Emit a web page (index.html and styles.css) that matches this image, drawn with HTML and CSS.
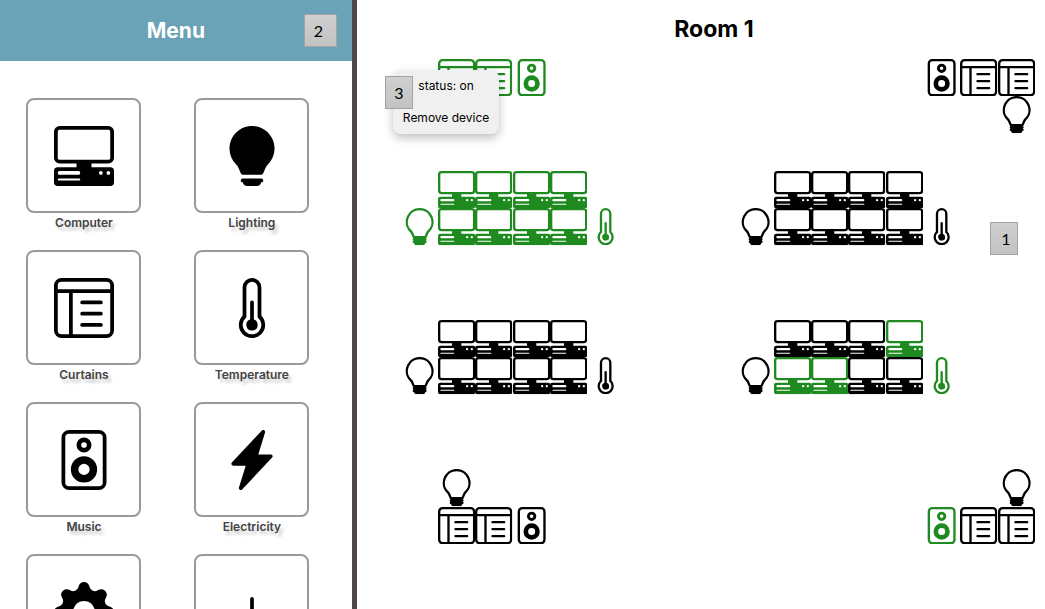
FILE: index.html
```html
<!DOCTYPE html>
<html lang="en">
<head>
<meta charset="utf-8">
<title>Room 1</title>
<link rel="stylesheet" href="styles.css">
</head>
<body>
<svg class="sprite" aria-hidden="true">
  <symbol id="computer" viewBox="0 0 16 16"><path d="M1.500 0A1.500 1.500 0 0 0 0 1.500v7A1.500 1.500 0 0 0 1.500 10H6v1H1a1 1 0 0 0-1 1v3a1 1 0 0 0 1 1h14a1 1 0 0 0 1-1v-3a1 1 0 0 0-1-1h-5v-1h4.500A1.500 1.500 0 0 0 16 8.500v-7A1.500 1.500 0 0 0 14.500 0h-13Zm0 1h13a.5.5 0 0 1 .5.5v7a.5.5 0 0 1-.5.5h-13a.5.5 0 0 1-.5-.5v-7a.5.5 0 0 1 .5-.5ZM12 12.500a.5.5 0 1 1 1 0 .5.5 0 0 1-1 0Zm2 0a.5.5 0 1 1 1 0 .5.5 0 0 1-1 0ZM1.500 12h5a.5.5 0 0 1 0 1h-5a.5.5 0 0 1 0-1ZM1 14.250a.25.25 0 0 1 .25-.25h5.500a.25.25 0 1 1 0 .5h-5.500a.25.25 0 0 1-.25-.25Z"/></symbol>
  <symbol id="bulb" viewBox="0 0 16 16"><path d="M2 6a6 6 0 1 1 10.174 4.310c-.203.196-.359.4-.453.619l-.762 1.769A.5.5 0 0 1 10.500 13a.5.5 0 0 1 0 1 .5.5 0 0 1 0 1l-.224.447a1 1 0 0 1-.894.553H6.618a1 1 0 0 1-.894-.553L5.500 15a.5.5 0 0 1 0-1 .5.5 0 0 1 0-1 .5.5 0 0 1-.46-.302l-.761-1.770a1.964 1.964 0 0 0-.453-.618A5.984 5.984 0 0 1 2 6zm6-5a5 5 0 0 0-3.479 8.592c.263.254.514.564.676.941L5.830 12h4.342l.632-1.467c.162-.377.413-.687.676-.941A5 5 0 0 0 8 1z"/></symbol>
  <symbol id="bulb-fill" viewBox="0 0 16 16"><path d="M2 6a6 6 0 1 1 10.174 4.310c-.203.196-.359.4-.453.619l-.762 1.769A.5.5 0 0 1 10.500 13h-5a.5.5 0 0 1-.46-.302l-.761-1.770a1.964 1.964 0 0 0-.453-.618A5.984 5.984 0 0 1 2 6zm3 8.500a.5.5 0 0 1 .5-.5h5a.5.5 0 0 1 0 1l-.224.447a1 1 0 0 1-.894.553H6.618a1 1 0 0 1-.894-.553L5.500 15a.5.5 0 0 1-.5-.5z"/></symbol>
  <symbol id="curtains" viewBox="0 0 16 16"><path d="M13 6.500a.5.5 0 0 0-.5-.5h-5a.5.5 0 0 0 0 1h5a.5.5 0 0 0 .5-.5zm0 3a.5.5 0 0 0-.5-.5h-5a.5.5 0 0 0 0 1h5a.5.5 0 0 0 .5-.5zm-.5 2.500a.5.5 0 0 1 0 1h-5a.5.5 0 0 1 0-1h5z"/><path d="M14 0a2 2 0 0 1 2 2v12a2 2 0 0 1-2 2H2a2 2 0 0 1-2-2V2a2 2 0 0 1 2-2h12zM2 1a1 1 0 0 0-1 1v1h14V2a1 1 0 0 0-1-1H2zM1 4v10a1 1 0 0 0 1 1h2V4H1zm4 0v11h9a1 1 0 0 0 1-1V4H5z"/></symbol>
  <symbol id="thermometer" viewBox="0 0 16 16"><path d="M9.500 12.500a1.500 1.500 0 1 1-2-1.415V6.500a.5.5 0 0 1 1 0v4.585a1.500 1.500 0 0 1 1 1.415z"/><path d="M5.500 2.500a2.500 2.500 0 0 1 5 0v7.550a3.500 3.500 0 1 1-5 0V2.500zM8 1a1.500 1.500 0 0 0-1.500 1.500v7.987l-.167.15a2.500 2.500 0 1 0 3.333 0l-.166-.15V2.500A1.500 1.500 0 0 0 8 1z"/></symbol>
  <symbol id="speaker" viewBox="0 0 16 16"><path d="M12 1a1 1 0 0 1 1 1v12a1 1 0 0 1-1 1H4a1 1 0 0 1-1-1V2a1 1 0 0 1 1-1h8zM4 0a2 2 0 0 0-2 2v12a2 2 0 0 0 2 2h8a2 2 0 0 0 2-2V2a2 2 0 0 0-2-2H4z"/><path fill-rule="evenodd" d="M8 4.750a.75.75 0 1 0 0-1.500.75.75 0 0 0 0 1.500zM8 6a2 2 0 1 0 0-4 2 2 0 0 0 0 4zm0 3a1.500 1.500 0 1 0 0 3 1.500 1.500 0 0 0 0-3zm-3.500 1.500a3.500 3.500 0 1 1 7 0 3.500 3.500 0 0 1-7 0z"/></symbol>
  <symbol id="lightning" viewBox="0 0 16 16"><path d="M11.251.068a.5.5 0 0 1 .227.58L9.677 6.500H13a.5.5 0 0 1 .364.843l-8 8.500a.5.5 0 0 1-.842-.49L6.323 9.500H3a.5.5 0 0 1-.364-.843l8-8.500a.5.5 0 0 1 .615-.09z"/></symbol>
  <symbol id="gear" viewBox="0 0 16 16"><path d="M9.405 1.050c-.413-1.400-2.397-1.400-2.810 0l-.1.34a1.464 1.464 0 0 1-2.105.872l-.31-.17c-1.283-.698-2.686.705-1.987 1.987l.169.311c.446.82.023 1.841-.872 2.105l-.34.1c-1.400.413-1.400 2.397 0 2.810l.34.1a1.464 1.464 0 0 1 .872 2.105l-.17.31c-.698 1.283.705 2.686 1.987 1.987l.311-.169a1.464 1.464 0 0 1 2.105.872l.1.34c.413 1.400 2.397 1.400 2.810 0l.1-.34a1.464 1.464 0 0 1 2.105-.872l.31.17c1.283.698 2.686-.705 1.987-1.987l-.169-.311a1.464 1.464 0 0 1 .872-2.105l.34-.1c1.400-.413 1.400-2.397 0-2.810l-.34-.1a1.464 1.464 0 0 1-.872-2.105l.17-.31c.698-1.283-.705-2.686-1.987-1.987l-.311.169a1.464 1.464 0 0 1-2.105-.872l-.1-.34zM8 10.930a2.929 2.929 0 1 1 0-5.860 2.929 2.929 0 0 1 0 5.858z"/></symbol>
  <symbol id="plus" viewBox="0 0 16 16"><path d="M8 4a.5.5 0 0 1 .5.5v3h3a.5.5 0 0 1 0 1h-3v3a.5.5 0 0 1-1 0v-3h-3a.5.5 0 0 1 0-1h3v-3A.5.5 0 0 1 8 4z"/></symbol>
</svg>
<div class="app">
  <aside class="menu">
    <header class="menu-header">
      <h2 class="menu-title">Menu</h2>
      <span class="badge badge-menu">2</span>
    </header>
    <nav class="tiles" aria-label="Devices">
      <button class="tile" type="button"><span class="tile-box"><svg class="tile-icon"><use href="#computer"/></svg></span><span class="tile-label">Computer</span></button>
      <button class="tile" type="button"><span class="tile-box"><svg class="tile-icon"><use href="#bulb-fill"/></svg></span><span class="tile-label">Lighting</span></button>
      <button class="tile" type="button"><span class="tile-box"><svg class="tile-icon"><use href="#curtains"/></svg></span><span class="tile-label">Curtains</span></button>
      <button class="tile" type="button"><span class="tile-box"><svg class="tile-icon"><use href="#thermometer"/></svg></span><span class="tile-label">Temperature</span></button>
      <button class="tile" type="button"><span class="tile-box"><svg class="tile-icon"><use href="#speaker"/></svg></span><span class="tile-label">Music</span></button>
      <button class="tile" type="button"><span class="tile-box"><svg class="tile-icon"><use href="#lightning"/></svg></span><span class="tile-label">Electricity</span></button>
      <button class="tile" type="button" aria-label="Settings"><span class="tile-box"><svg class="tile-icon"><use href="#gear"/></svg></span></button>
      <button class="tile" type="button" aria-label="Add"><span class="tile-box"><svg class="tile-icon"><use href="#plus"/></svg></span></button>
    </nav>
  </aside>
  <main class="room">
    <h1 class="room-title">Room 1</h1>
    <div class="plan">
      <div class="strip row-1 col-2">
        <svg class="device on"><use href="#curtains"/></svg><svg class="device on"><use href="#curtains"/></svg><svg class="device on"><use href="#speaker"/></svg>
      </div>
      <div class="strip row-1 col-15">
        <svg class="device"><use href="#speaker"/></svg><svg class="device"><use href="#curtains"/></svg><svg class="device"><use href="#curtains"/></svg>
      </div>
      <svg class="device row-2 col-17"><use href="#bulb"/></svg>

      <svg class="device on row-5 col-1"><use href="#bulb"/></svg>
      <div class="desks row-4 col-2">
        <svg class="device on"><use href="#computer"/></svg><svg class="device on"><use href="#computer"/></svg><svg class="device on"><use href="#computer"/></svg><svg class="device on"><use href="#computer"/></svg>
        <svg class="device on"><use href="#computer"/></svg><svg class="device on"><use href="#computer"/></svg><svg class="device on"><use href="#computer"/></svg><svg class="device on"><use href="#computer"/></svg>
      </div>
      <svg class="device on row-5 col-6"><use href="#thermometer"/></svg>

      <svg class="device row-5 col-10"><use href="#bulb"/></svg>
      <div class="desks row-4 col-11">
        <svg class="device"><use href="#computer"/></svg><svg class="device"><use href="#computer"/></svg><svg class="device"><use href="#computer"/></svg><svg class="device"><use href="#computer"/></svg>
        <svg class="device"><use href="#computer"/></svg><svg class="device"><use href="#computer"/></svg><svg class="device"><use href="#computer"/></svg><svg class="device"><use href="#computer"/></svg>
      </div>
      <svg class="device row-5 col-15"><use href="#thermometer"/></svg>

      <svg class="device row-9 col-1"><use href="#bulb"/></svg>
      <div class="desks row-8 col-2">
        <svg class="device"><use href="#computer"/></svg><svg class="device"><use href="#computer"/></svg><svg class="device"><use href="#computer"/></svg><svg class="device"><use href="#computer"/></svg>
        <svg class="device"><use href="#computer"/></svg><svg class="device"><use href="#computer"/></svg><svg class="device"><use href="#computer"/></svg><svg class="device"><use href="#computer"/></svg>
      </div>
      <svg class="device row-9 col-6"><use href="#thermometer"/></svg>

      <svg class="device row-9 col-10"><use href="#bulb"/></svg>
      <div class="desks row-8 col-11">
        <svg class="device"><use href="#computer"/></svg><svg class="device"><use href="#computer"/></svg><svg class="device"><use href="#computer"/></svg><svg class="device on"><use href="#computer"/></svg>
        <svg class="device on"><use href="#computer"/></svg><svg class="device on"><use href="#computer"/></svg><svg class="device"><use href="#computer"/></svg><svg class="device"><use href="#computer"/></svg>
      </div>
      <svg class="device on row-9 col-15"><use href="#thermometer"/></svg>

      <svg class="device row-12 col-2"><use href="#bulb"/></svg>
      <svg class="device row-12 col-17"><use href="#bulb"/></svg>
      <div class="strip row-13 col-2">
        <svg class="device"><use href="#curtains"/></svg><svg class="device"><use href="#curtains"/></svg><svg class="device"><use href="#speaker"/></svg>
      </div>
      <div class="strip row-13 col-15">
        <svg class="device on"><use href="#speaker"/></svg><svg class="device"><use href="#curtains"/></svg><svg class="device"><use href="#curtains"/></svg>
      </div>

      <div class="popup">
        <span class="popup-status">status: on</span>
        <button class="popup-action" type="button">Remove device</button>
      </div>
      <span class="badge badge-popup">3</span>
      <span class="badge badge-room">1</span>
    </div>
  </main>
</div>
</body>
</html>
```
FILE: styles.css
```css
* {
  box-sizing: border-box;
}

body {
  margin: 0;
  background: #fff;
  color: #000;
  font-family: Inter, "Liberation Sans", sans-serif;
}

button {
  border: 0;
  padding: 0;
  background: none;
  color: inherit;
  font: inherit;
  cursor: pointer;
}

svg {
  display: block;
  fill: currentColor;
}

.sprite {
  position: absolute;
  width: 0;
  height: 0;
}

.app {
  display: grid;
  grid-template-columns: 14fr 27fr;
  height: 100vh;
  overflow: hidden;
}

.menu {
  min-height: 0;
  overflow: hidden;
  border-right: 5px solid #4d4747;
}

.menu-header {
  position: relative;
  display: flex;
  align-items: center;
  justify-content: center;
  height: 61px;
  background: #6aa3b7;
  color: #fff;
}

.menu-title,
.room-title {
  margin: 0;
  line-height: 28px;
  font-weight: 700;
}

.menu-title {
  font-size: 21px;
}

.room-title {
  padding-right: 8px;
  font-size: 23px;
  text-align: center;
}

.badge {
  display: flex;
  align-items: center;
  justify-content: center;
  width: 28px;
  height: 33px;
  border: 1px solid #a3a3a3;
  background: linear-gradient(#d0d0d0, #c2c2c2);
  color: #000;
  font-family: Lato, sans-serif;
  font-size: 16px;
  line-height: 20px;
}

.badge-menu {
  position: absolute;
  right: 15px;
  width: 33px;
  padding-right: 4px;
}

.tiles {
  display: grid;
  grid-template-columns: 1fr 1fr;
  row-gap: 18px;
  padding: 37px 16px 0 0;
}

.tile {
  display: flex;
  flex-direction: column;
  align-items: center;
}

.tile-box {
  display: grid;
  place-items: center;
  width: 115px;
  height: 115px;
  border: 2px solid #999;
  border-radius: 8px;
}

.tile-icon {
  width: 60px;
  height: 60px;
}

.tile-label {
  color: #444;
  font-size: 12px;
  line-height: 19px;
  font-weight: 600;
  text-shadow: 3px 4px 3px rgba(0, 0, 0, 0.2);
}

.room {
  padding: 15px 10px 0 44px;
}

.plan {
  position: relative;
  display: grid;
  grid-template-columns: repeat(17, minmax(0, 1fr));
  grid-template-rows: repeat(13, minmax(0, 1fr));
  aspect-ratio: 17 / 13;
  margin-top: 16px;
}

.strip,
.desks {
  display: grid;
  min-height: 0;
}

.strip {
  grid-column-end: span 3;
  grid-template-columns: repeat(3, minmax(0, 1fr));
  grid-template-rows: minmax(0, 1fr);
}

.desks {
  grid-column-end: span 4;
  grid-row-end: span 2;
  grid-template-columns: repeat(4, minmax(0, 1fr));
  grid-template-rows: repeat(2, minmax(0, 1fr));
}

.device {
  width: 100%;
  height: 100%;
}

.on {
  color: #1f8a1f;
}

.row-1 { grid-row-start: 1; }
.row-2 { grid-row-start: 2; }
.row-4 { grid-row-start: 4; }
.row-5 { grid-row-start: 5; }
.row-8 { grid-row-start: 8; }
.row-9 { grid-row-start: 9; }
.row-12 { grid-row-start: 12; }
.row-13 { grid-row-start: 13; }

.col-1 { grid-column-start: 1; }
.col-2 { grid-column-start: 2; }
.col-6 { grid-column-start: 6; }
.col-10 { grid-column-start: 10; }
.col-11 { grid-column-start: 11; }
.col-15 { grid-column-start: 15; }
.col-17 { grid-column-start: 17; }

.popup {
  position: absolute;
  top: 11px;
  left: -8px;
  display: flex;
  flex-direction: column;
  align-items: center;
  gap: 16px;
  padding: 8px 10px;
  border-radius: 8px;
  background: #f0f0f0;
  box-shadow: 0 4px 10px rgba(0, 0, 0, 0.25);
  font-size: 12px;
  line-height: 16px;
  white-space: nowrap;
}

.badge-popup {
  position: absolute;
  top: 17px;
  left: -16px;
}

.badge-room {
  position: absolute;
  top: 163px;
  right: 17px;
  padding-left: 4px;
}
```
